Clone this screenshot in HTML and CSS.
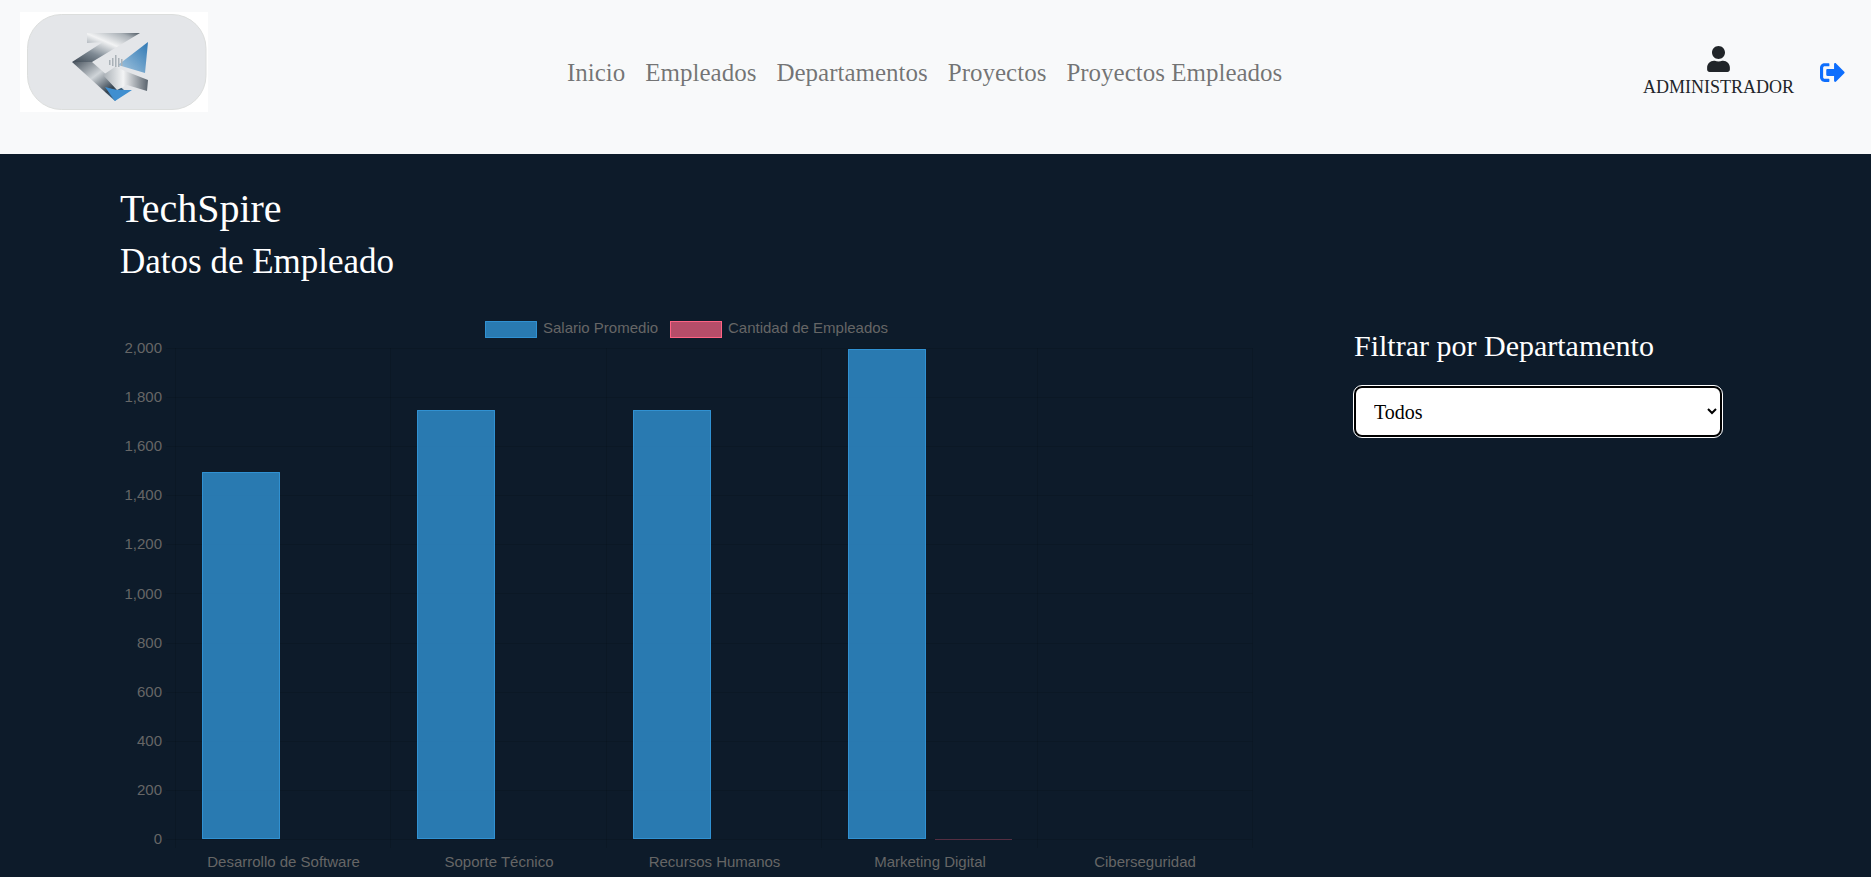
FILE: index.html
```html
<!DOCTYPE html>
<html lang="es">
<head>
<meta charset="utf-8">
<title>TechSpire - Datos de Empleado</title>
<link rel="stylesheet" href="styles.css">
</head>
<body>
<header class="topbar">
  <svg class="logo" viewBox="20 12 188 100" aria-label="Logo">
    <defs>
      <linearGradient id="s1" x1="0" y1="1" x2="1" y2="0"><stop offset="0" stop-color="#3f4a55"/><stop offset=".3" stop-color="#7f8a94"/><stop offset=".6" stop-color="#f2f3f4"/><stop offset=".85" stop-color="#aab1b7"/><stop offset="1" stop-color="#4f5a64"/></linearGradient>
      <linearGradient id="s2" x1="0" y1="0" x2="1" y2="1"><stop offset="0" stop-color="#46515c"/><stop offset=".4" stop-color="#cfd4d8"/><stop offset=".72" stop-color="#36434f"/><stop offset="1" stop-color="#3f8fd0"/></linearGradient>
      <linearGradient id="s3" x1="0" y1="0" x2="1" y2="0"><stop offset="0" stop-color="#a8afb5"/><stop offset=".45" stop-color="#f3f4f5"/><stop offset="1" stop-color="#59636d"/></linearGradient>
      <linearGradient id="b1" x1="1" y1="0" x2="0" y2="1"><stop offset="0" stop-color="#2f78b4"/><stop offset="1" stop-color="#a9c9e0"/></linearGradient>
      <filter id="soft"><feGaussianBlur stdDeviation=".45"/></filter>
    </defs>
    <rect class="logo-bg" x="20" y="12" width="188" height="100"/>
    <rect class="logo-plate" x="27.500" y="14.500" width="178.500" height="95" rx="34"/>
    <g filter="url(#soft)">
      <polygon fill="url(#b1)" points="148,42 145,73 118,65"/>
      <polygon fill="url(#s1)" points="87,33 140,33 92,62 72,62 103,42 87,43"/>
      <polygon fill="url(#s2)" points="72,62 92,62 124,90 115,101"/>
      <polygon fill="#3f8fd0" points="105,87 117,90 132,90 115,101"/>
      <polygon fill="url(#s3)" points="103,75 115,67 148,80 147,91 127,85 117,90"/>
      <path class="logo-city" d="M109 65v-5h1.500v5zM112 66v-8h1.500v8zM115 67v-12h1.500v12zM118 67v-9h1.500v9zM121 66v-7h1.500v7z"/>
    </g>
  </svg>
  <nav class="nav">
    <a href="#">Inicio</a>
    <a href="#">Empleados</a>
    <a href="#">Departamentos</a>
    <a href="#">Proyectos</a>
    <a href="#">Proyectos Empleados</a>
  </nav>
  <div class="account">
    <div class="user">
      <svg class="user-icon" viewBox="0 0 448 512"><path d="M224 256c70.700 0 128-57.300 128-128S294.700 0 224 0 96 57.300 96 128s57.300 128 128 128zm89.600 32h-16.700c-22.200 10.200-46.900 16-72.900 16s-50.600-5.800-72.900-16h-16.700C60.200 288 0 348.200 0 422.400V464c0 26.500 21.500 48 48 48h352c26.500 0 48-21.500 48-48v-41.600c0-74.200-60.200-134.400-134.400-134.400z"/></svg>
      <span>ADMINISTRADOR</span>
    </div>
    <a class="logout" href="#" aria-label="Salir">
      <svg viewBox="0 0 512 512"><path d="M497 273L329 441c-15 15-41 4.500-41-17v-96H152c-13.300 0-24-10.700-24-24v-96c0-13.300 10.700-24 24-24h136V88c0-21.400 25.900-32 41-17l168 168c9.300 9.400 9.300 24.600 0 34zM192 436v-40c0-6.600-5.400-12-12-12H96c-17.700 0-32-14.300-32-32V160c0-17.700 14.300-32 32-32h84c6.600 0 12-5.400 12-12V76c0-6.600-5.400-12-12-12H96c-53 0-96 43-96 96v192c0 53 43 96 96 96h84c6.600 0 12-5.400 12-12z"/></svg>
    </a>
  </div>
</header>
<main class="content">
  <h1 class="title">TechSpire</h1>
  <h2 class="subtitle">Datos de Empleado</h2>
  <div class="columns">
    <div class="chart-col">
      <svg class="chart" viewBox="116 316 1144 561">
        <g class="grid">
          <path d="M175.500 348V848M390.500 348V848M606.500 348V848M821.500 348V848M1037.500 348V848M1252.500 348V848"/>
          <path d="M166 348.500H1252.500M166 397.500H1252.500M166 446.500H1252.500M166 495.500H1252.500M166 544.500H1252.500M166 593.500H1252.500M166 643.500H1252.500M166 692.500H1252.500M166 741.500H1252.500M166 790.500H1252.500M166 839.500H1252.500"/>
        </g>
        <g class="legend">
          <rect class="bar" x="485.500" y="321.500" width="51" height="16"/>
          <text x="543" y="333">Salario Promedio</text>
          <rect class="bar-red" x="670.500" y="321.500" width="51" height="16"/>
          <text x="728" y="333">Cantidad de Empleados</text>
        </g>
        <g class="ticks">
          <text x="162" y="353">2,000</text>
          <text x="162" y="402">1,800</text>
          <text x="162" y="451">1,600</text>
          <text x="162" y="500">1,400</text>
          <text x="162" y="549">1,200</text>
          <text x="162" y="599">1,000</text>
          <text x="162" y="648">800</text>
          <text x="162" y="697">600</text>
          <text x="162" y="746">400</text>
          <text x="162" y="795">200</text>
          <text x="162" y="844">0</text>
        </g>
        <g class="labels">
          <text x="283.500" y="867">Desarrollo de Software</text>
          <text x="499" y="867">Soporte Técnico</text>
          <text x="714.500" y="867">Recursos Humanos</text>
          <text x="930" y="867">Marketing Digital</text>
          <text x="1145" y="867">Ciberseguridad</text>
        </g>
        <rect class="bar" x="202.500" y="472.500" width="77" height="366"/>
        <rect class="bar" x="417.500" y="410.500" width="77" height="428"/>
        <rect class="bar" x="633.500" y="410.500" width="77" height="428"/>
        <rect class="bar" x="848.500" y="349.500" width="77" height="489"/>
        <path class="count-line" d="M935 839.500H1012"/>
      </svg>
    </div>
    <aside class="filter">
      <h3 class="filter-title">Filtrar por Departamento</h3>
      <select class="filter-select">
        <option>Todos</option>
      </select>
    </aside>
  </div>
</main>
</body>
</html>
```
FILE: styles.css
```css
* { box-sizing: border-box; }
html, body { height: 100%; }
body {
  margin: 0;
  overflow: hidden;
  background: #0d1b2a;
  color: #fff;
  font-family: "Liberation Serif", "Times New Roman", serif;
}
.topbar {
  height: 154px;
  padding: 0 0 10px 20px;
  display: flex;
  align-items: center;
  background: #f8f9fa;
}
.logo {
  width: 188px;
  height: 100px;
  align-self: flex-start;
  margin-top: 12px;
  flex: none;
}
.logo-bg { fill: #fff; }
.logo-plate { fill: #e4e6e9; stroke: #dcdedd; stroke-width: 1; }
.logo-city { fill: #aab2b8; }
.nav {
  margin-left: 359px;
  margin-top: 2px;
  display: flex;
  gap: 20px;
  font-size: 25px;
}
.nav a {
  color: rgba(0, 0, 0, .55);
  text-decoration: none;
}
.account {
  margin-left: auto;
  padding-right: 26px;
  display: flex;
  align-items: center;
  gap: 26px;
}
.user {
  display: flex;
  flex-direction: column;
  align-items: center;
  gap: 3px;
  font-size: 18px;
  line-height: 24px;
  color: #212529;
}
.user-icon {
  width: 23px;
  height: 26px;
  fill: #212529;
}
.logout {
  display: block;
  width: 25px;
  height: 25px;
}
.logout svg {
  display: block;
  width: 25px;
  height: 25px;
  fill: #0d6efd;
}
.content { padding: 31px 0 0 120px; }
.title {
  margin: 0;
  font-size: 40px;
  font-weight: 400;
  line-height: 48px;
}
.subtitle {
  margin: 8px 0 0;
  font-size: 35px;
  font-weight: 400;
  line-height: 42px;
}
.columns {
  margin-top: 33px;
  display: flex;
}
.chart-col {
  margin-left: -4px;
  width: 1144px;
  flex: none;
}
.chart {
  display: block;
  width: 1144px;
  height: 561px;
}
.grid path {
  fill: none;
  stroke: rgba(0, 0, 0, .1);
  stroke-width: 1;
}
.legend text, .ticks text, .labels text {
  fill: #666;
  font-family: "Liberation Sans", Arial, sans-serif;
  font-size: 15px;
}
.ticks text { text-anchor: end; }
.labels text { text-anchor: middle; }
.bar {
  fill: rgba(54, 162, 235, .7);
  stroke: rgba(54, 162, 235, .8);
  stroke-width: 1;
}
.bar-red {
  fill: rgba(255, 99, 132, .7);
  stroke: rgb(255, 99, 132);
  stroke-width: 1;
}
.count-line {
  stroke: rgba(255, 99, 132, .3);
  stroke-width: 1;
}
.filter {
  margin-left: 94px;
  width: 368px;
  flex: none;
  padding-top: 12px;
}
.filter-title {
  margin: 0;
  font-size: 30px;
  font-weight: 400;
  line-height: 36px;
}
.filter-select {
  display: block;
  width: 100%;
  height: 51px;
  margin-top: 22px;
  padding: 0 10px 0 14px;
  font-family: inherit;
  font-size: 20px;
  color: #000;
  background: #fff;
  border: 2px solid #000;
  border-radius: 8px;
  outline: 1px solid #fff;
}
```
